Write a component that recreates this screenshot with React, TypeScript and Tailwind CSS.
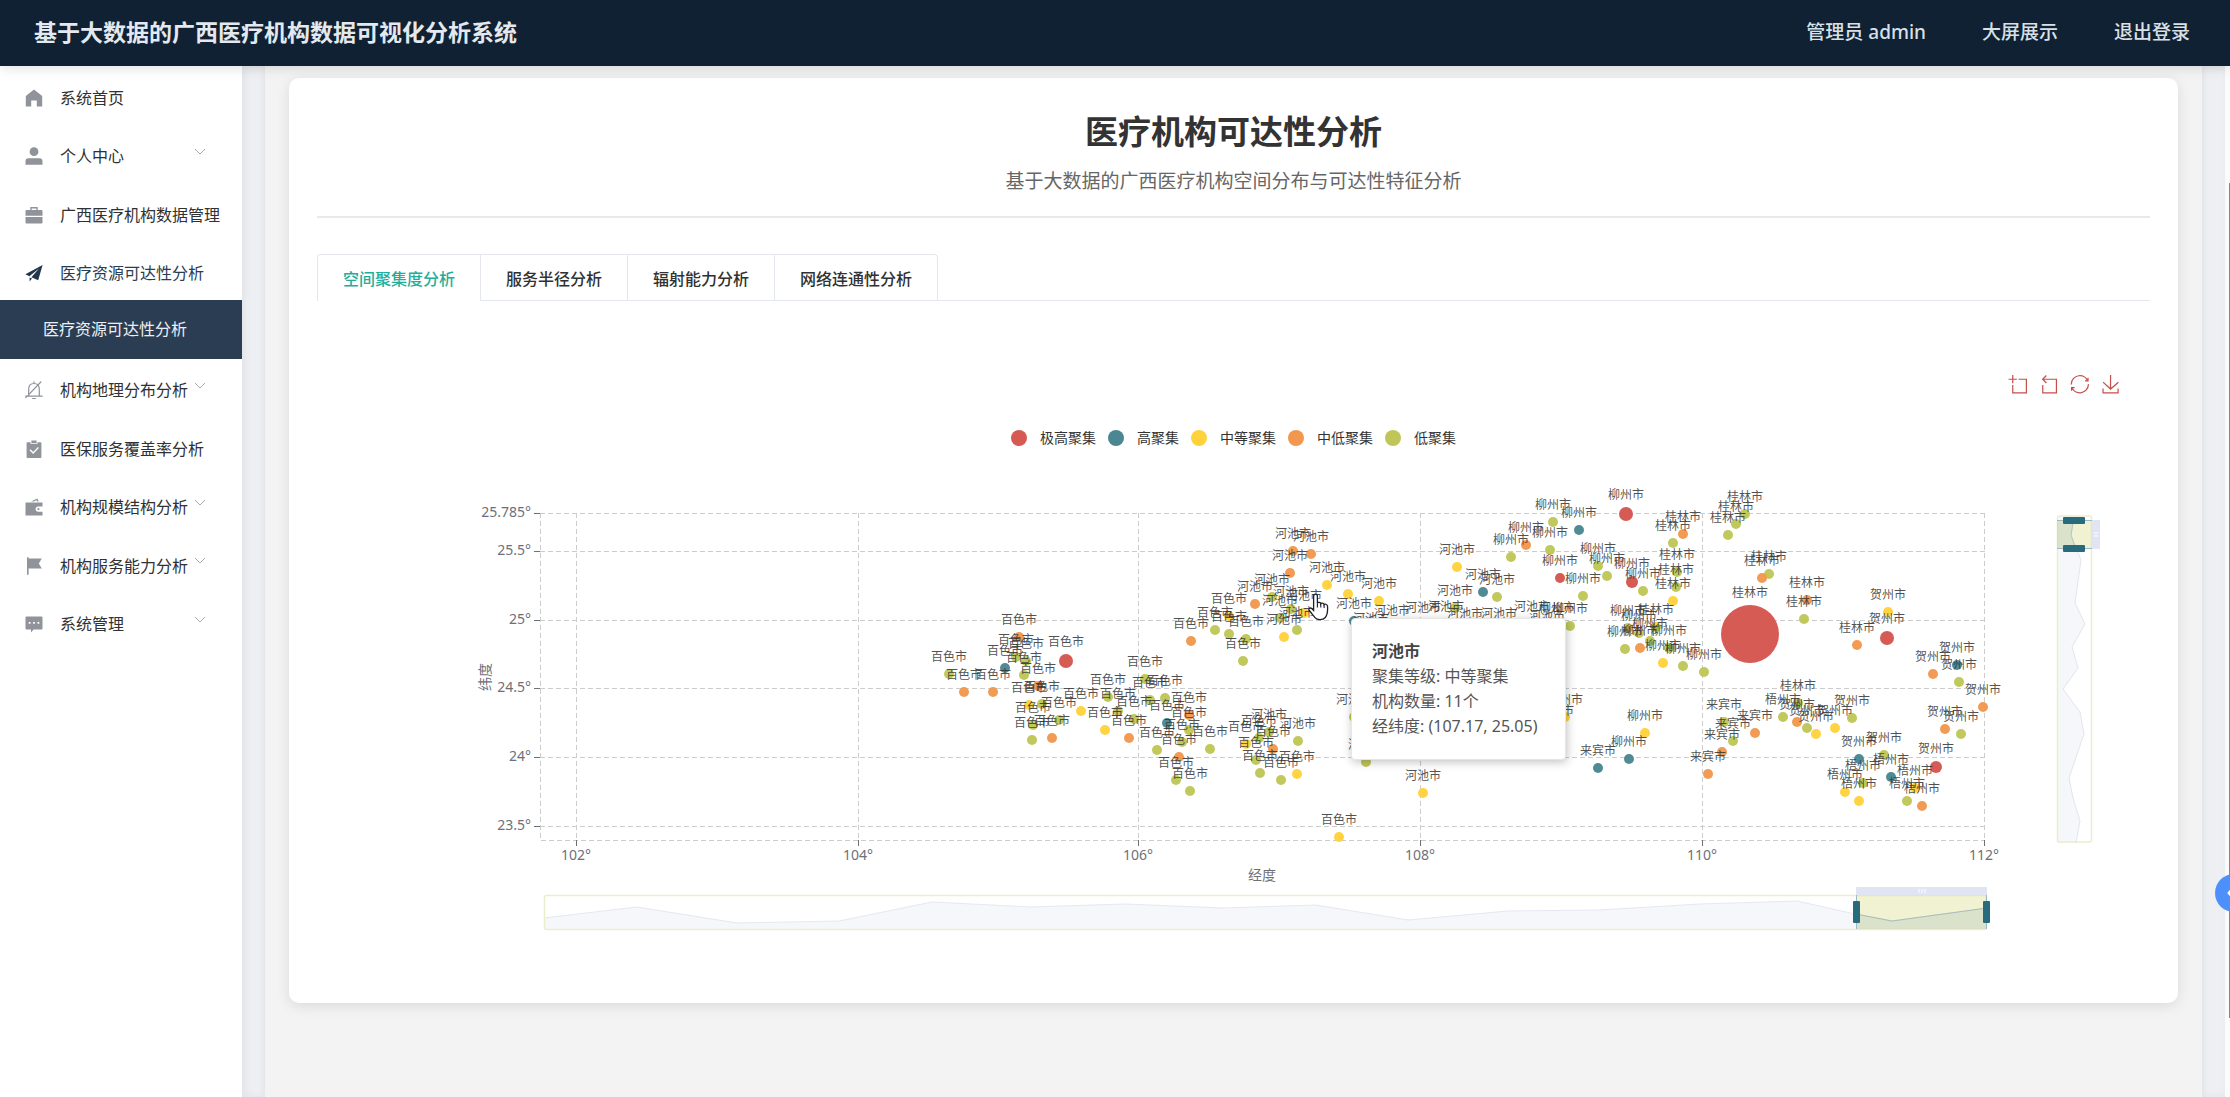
import { useState } from 'react'
import type { ReactNode } from 'react'

type Level = 'r' | 't' | 'y' | 'o' | 'g'

const levels: { key: Level; name: string; color: string; dot: string }[] = [
  { key: 'r', name: '极高聚集', color: '#d5564f', dot: 'bg-[#d65a54]' },
  { key: 't', name: '高聚集', color: '#4a8792', dot: 'bg-[#4a8792]' },
  { key: 'y', name: '中等聚集', color: '#ffd23c', dot: 'bg-[#ffd23c]' },
  { key: 'o', name: '中低聚集', color: '#f2984e', dot: 'bg-[#f2984e]' },
  { key: 'g', name: '低聚集', color: '#bfc657', dot: 'bg-[#bfc657]' },
]

const colorOf = (key: Level) => levels.find((l) => l.key === key)!.color

type Point = [number, number, Level, number?]

// [x, y, level, radius], grouped by city
const cities: { name: string; points: Point[] }[] = [
  {
    name: '百色市',
    points: [
      [949, 674, 'g'], [964, 692, 'o'], [993, 692, 'o'], [1005, 668, 't'], [1019, 637, 'o'],
      [1016, 657, 'g'], [1026, 661, 'g'], [1024, 675, 'g'], [1038, 686, 'o'], [1066, 661, 'r', 7],
      [1029, 705, 'y'], [1042, 704, 'g'], [1059, 720, 'g'], [1033, 725, 'g'], [1032, 740, 'g'],
      [1052, 738, 'o'], [1081, 711, 'y'], [1108, 697, 'g'], [1118, 711, 'g'], [1134, 719, 'g'],
      [1105, 730, 'y'], [1129, 738, 'o'], [1145, 679, 'g'], [1150, 700, 'g'], [1165, 698, 'g'],
      [1167, 723, 't'], [1189, 715, 'o'], [1189, 730, 'g'], [1182, 742, 'g'], [1157, 750, 'g'],
      [1179, 757, 'o'], [1210, 749, 'g'], [1176, 780, 'g'], [1190, 791, 'g'], [1191, 641, 'o'],
      [1215, 630, 'g'], [1229, 616, 'y'], [1229, 634, 'g'], [1246, 639, 'g'], [1243, 661, 'g'],
      [1259, 738, 'g'], [1246, 744, 'y'], [1273, 749, 'o'], [1256, 760, 'g'], [1260, 773, 'g'],
      [1297, 774, 'y'], [1281, 780, 'g'], [1339, 837, 'y'],
    ],
  },
  {
    name: '河池市',
    points: [
      [1255, 604, 'o'], [1272, 597, 'g'], [1290, 573, 'o'], [1293, 551, 'o'], [1311, 554, 'o'],
      [1327, 585, 'y'], [1348, 594, 'y'], [1291, 609, 'g'], [1304, 613, 'y'], [1280, 618, 'g'],
      [1297, 630, 'g'], [1284, 637, 'y'], [1269, 732, 'g'], [1298, 741, 'g'], [1457, 567, 'y'],
      [1379, 601, 'y'], [1483, 592, 't'], [1497, 597, 'g'], [1455, 608, 'g'], [1354, 621, 't'],
      [1392, 628, 'g'], [1423, 625, 'g'], [1446, 624, 'g'], [1465, 631, 'g'], [1499, 631, 'y'],
      [1371, 636, 'g'], [1532, 624, 'g'], [1547, 633, 'g'], [1423, 793, 'y'], [1366, 762, 'g'],
      [1354, 717, 'g'],
    ],
  },
  {
    name: '柳州市',
    points: [
      [1557, 625, 'g'], [1570, 626, 'g'], [1553, 522, 'g'], [1579, 530, 't'], [1626, 514, 'r', 7],
      [1526, 545, 'o'], [1550, 550, 'g'], [1511, 557, 'g'], [1598, 566, 'g'], [1560, 578, 'r', 5],
      [1607, 576, 'g'], [1632, 582, 'r', 6], [1583, 596, 'g'], [1643, 591, 'g'], [1628, 628, 'g'],
      [1639, 633, 'g'], [1650, 641, 'g'], [1625, 649, 'g'], [1640, 648, 'o'], [1669, 648, 'g'],
      [1663, 663, 'y'], [1683, 666, 'g'], [1704, 672, 'g'], [1645, 733, 'y'], [1629, 759, 't'],
      [1565, 717, 'y'], [1556, 728, 'g'],
    ],
  },
  {
    name: '桂林市',
    points: [
      [1683, 534, 'o'], [1673, 543, 'g'], [1677, 572, 'g'], [1676, 587, 'g'], [1673, 601, 'y'],
      [1656, 627, 'y'], [1745, 514, 'g'], [1736, 524, 'g'], [1728, 535, 'g'], [1769, 574, 'g'],
      [1762, 578, 'o'], [1750, 634, 'r', 29], [1807, 600, 'o'], [1804, 619, 'g'], [1857, 645, 'o'],
      [1798, 703, 'g'],
    ],
  },
  {
    name: '贺州市',
    points: [
      [1888, 612, 'y'], [1887, 638, 'r', 7], [1957, 665, 't'], [1933, 674, 'o'], [1959, 682, 'g'],
      [1983, 707, 'o'], [1945, 729, 'o'], [1961, 734, 'g'], [1936, 767, 'r', 6], [1797, 722, 'o'],
      [1807, 728, 'g'], [1852, 718, 'g'], [1835, 728, 'y'], [1816, 734, 'y'], [1859, 759, 't'],
      [1884, 755, 'g'],
    ],
  },
  {
    name: '梧州市',
    points: [
      [1783, 717, 'g'], [1891, 777, 't'], [1863, 783, 'g'], [1845, 792, 'y'], [1859, 801, 'y'],
      [1915, 788, 'y'], [1907, 801, 'g'], [1922, 806, 'o'],
    ],
  },
  {
    name: '来宾市',
    points: [
      [1598, 768, 't'], [1724, 722, 'g'], [1755, 733, 'o'], [1733, 741, 'g'], [1722, 752, 'o'],
      [1708, 774, 'o'],
    ],
  },
]

const xTicks = [
  { at: 576, text: '102°' },
  { at: 858, text: '104°' },
  { at: 1138, text: '106°' },
  { at: 1420, text: '108°' },
  { at: 1702, text: '110°' },
  { at: 1984, text: '112°' },
]

const yTicks = [
  { at: 513, text: '25.785°' },
  { at: 551, text: '25.5°' },
  { at: 620, text: '25°' },
  { at: 688, text: '24.5°' },
  { at: 757, text: '24°' },
  { at: 826, text: '23.5°' },
]

// echarts toolbox glyphs, drawn on a 58 x 58 box
const tools = [
  { name: '区域缩放', d: 'M0,13.5h26.9 M13.5,26.9V0 M32.1,13.5H58V58H13.5 V32.1' },
  { name: '区域缩放还原', d: 'M22,1.4L9.9,13.5l12.3,12.3 M10.3,13.5H54.9v44.6 H10.3v-26' },
  {
    name: '还原',
    d: 'M47,18.9h9.8V8.7 M56.3,20.1 C52.1,9,40.5,0.6,26.8,2.1C12.6,3.7,1.6,16.2,2.1,30.6 M13,41.1H3.1v10.2 M3.7,39.9c4.2,11.1,15.8,19.5,29.5,18 c14.2-1.6,25.2-14.1,24.7-28.5',
  },
  { name: '保存为图片', d: 'M4.7,22.9L29.3,45.5L54.7,23.4M4.6,43.6L4.6,58L53.8,58L53.8,43.6M29.2,45.1L29.2,0' },
]

const icons: Record<string, ReactNode> = {
  home: <path fill="currentColor" d="M9 0.5 17.2 7v10.5h-5.4V11.6H6.2v5.9H.8V7z" />,
  user: (
    <>
      <circle cx="9" cy="4.7" r="4.4" fill="currentColor" />
      <path fill="currentColor" d="M3.5 11.2h11q3 0 3 3v3.5H.5v-3.5q0-3 3-3z" />
    </>
  ),
  case: (
    <>
      <path fill="none" stroke="currentColor" strokeWidth="1.4" d="M6 4.5V1.7h6v2.8" />
      <path fill="currentColor" d="M1.5 4h15q1 0 1 1v4.7H.5V5q0-1 1-1zM.5 11h17v5.5q0 1-1 1h-15q-1 0-1-1z" />
    </>
  ),
  send: <path fill="currentColor" d="M17.6 1 .4 10.2l4 2L14 4.5l-7.6 8.7 6.8 3zM4.6 13.5v4l2.4-2.9z" />,
  bell: (
    <path
      fill="none"
      stroke="currentColor"
      strokeWidth="1.2"
      strokeLinecap="round"
      d="M9 0.8v1.4M3.7 15V8Q3.7 2.5 9 2.5T14.3 8v7M.8 15.2h16.4M7.6 17.6h2.8M.8 16.6 15.8 1"
    />
  ),
  claim: (
    <>
      <path fill="currentColor" d="M2.5 2.2h3v1.6h7V2.2h3q.9 0 .9.9v14q0 .9-.9.9h-13q-.9 0-.9-.9v-14q0-.9.9-.9zM6.4.6h5.2v2.4H6.4z" />
      <path fill="none" stroke="#fff" strokeWidth="1.4" d="M5 9.8 8.2 13l5.2-5.4" />
    </>
  ),
  wallet: (
    <>
      <path fill="currentColor" d="M6 3.6 12.2.6l1.7 3h-1.6l-.8-1.3-2.7 1.3zM.5 4.5h17v4h-4.3a2.6 2.6 0 0 0 0 5.2h4.3V17.5H.5z" />
      <circle cx="13.4" cy="11.1" r="1.1" fill="currentColor" />
    </>
  ),
  flag: <path fill="currentColor" d="M2 .3h1.6v1.3h13.2l-3 5 3 5H3.6v6.2H2z" />,
  comment: (
    <>
      <path fill="currentColor" d="M1.5 1.5h15q1 0 1 1v11q0 1-1 1h-8L6 17.4v-2.9H1.5q-1 0-1-1v-11q0-1 1-1z" />
      <path fill="#fff" d="M3.7 7h1.8v1.8H3.7zM8.1 7h1.8v1.8H8.1zM12.5 7h1.8v1.8h-1.8z" />
    </>
  ),
}

const menu = [
  { icon: 'home', text: '系统首页' },
  { icon: 'user', text: '个人中心', arrow: true },
  { icon: 'case', text: '广西医疗机构数据管理' },
  { icon: 'send', text: '医疗资源可达性分析', open: true },
  { text: '医疗资源可达性分析', sub: true },
  { icon: 'bell', text: '机构地理分布分析', arrow: true },
  { icon: 'claim', text: '医保服务覆盖率分析' },
  { icon: 'wallet', text: '机构规模结构分析', arrow: true },
  { icon: 'flag', text: '机构服务能力分析', arrow: true },
  { icon: 'comment', text: '系统管理', arrow: true },
]

const tabs = ['空间聚集度分析', '服务半径分析', '辐射能力分析', '网络连通性分析']

function Sidebar() {
  return (
    <aside className="w-[242px] shrink-0 bg-white">
      <nav className="grid h-[585px] auto-rows-fr">
        {menu.map((item, i) =>
          item.sub ? (
            <a key={i} href="#" className="flex items-center bg-[#2b3d52] pl-[43px] text-[16px] leading-6 text-[#eceff2]">
              {item.text}
            </a>
          ) : (
            <a
              key={i}
              href="#"
              className={`relative flex items-center pt-[5px] pl-[25px] text-[16px] leading-6 whitespace-nowrap ${
                item.open ? 'text-[#2b3d52]' : 'text-[#303133]'
              }`}
            >
              <svg
                viewBox="0 0 18 18"
                className={`h-[18px] w-[18px] shrink-0 ${item.open ? 'text-[#22364b]' : 'text-[#909399]'}`}
              >
                {icons[item.icon!]}
              </svg>
              <span className="ml-[17px]">{item.text}</span>
              {item.arrow && (
                <svg viewBox="0 0 12 8" className="absolute top-[23px] left-[194px] h-2 w-3">
                  <path d="M1 1l5 5 5-5" fill="none" stroke="#a9acb3" />
                </svg>
              )}
            </a>
          )
        )}
      </nav>
    </aside>
  )
}

function SliderX() {
  return (
    <g>
      <path
        d="M544 929V918L637 907 737 923 839 921 932 902 1031 907 1125 904 1223 908 1316 905 1408 920 1508 911 1600 910 1700 904 1797 901 1855 914 1892 921 1987 908V929z"
        fill="#f6f7fb"
      />
      <path
        d="M544 918L637 907 737 923 839 921 932 902 1031 907 1125 904 1223 908 1316 905 1408 920 1508 911 1600 910 1700 904 1797 901 1855 914 1892 921 1987 908"
        fill="none"
        stroke="#e6e8f1"
      />
      <rect x="544.5" y="895.5" width="1442" height="34" rx="2" fill="none" stroke="#ebedcb" strokeWidth="1.5" />
      <rect x="1856" y="895" width="131" height="34" fill="#dfe29c" fillOpacity="0.45" />
      <path d="M1856 914l36 7 95-13v21h-131z" fill="#7f9fb0" fillOpacity="0.15" />
      <path d="M1856 914l36 7 95-13" fill="none" stroke="#a9bdb9" />
      <rect x="1856" y="887" width="131" height="8" fill="#e1e4f3" />
      <path d="M1919 889v4M1922 889v4M1925 889v4" stroke="#fff" />
      <path d="M1856.5 895v34M1986.5 895v34" stroke="#9db9c4" />
      <rect x="1853" y="901" width="7" height="22" rx="1" fill="#276b7c" />
      <rect x="1983" y="901" width="7" height="22" rx="1" fill="#276b7c" />
    </g>
  )
}

function SliderY() {
  return (
    <g>
      <path
        d="M2057 516H2073V523L2071 535 2081 560 2075 603 2085 624 2072 647 2078 668 2063 689 2080 712 2084 734 2069 778 2073 798 2080 821 2076 843H2057z"
        fill="#f6f7fb"
      />
      <path
        d="M2073 516V523L2071 535 2081 560 2075 603 2085 624 2072 647 2078 668 2063 689 2080 712 2084 734 2069 778 2073 798 2080 821 2076 843"
        fill="none"
        stroke="#e3e5ef"
      />
      <rect x="2057.5" y="516" width="34" height="326" rx="2" fill="none" stroke="#ebedcb" strokeWidth="1.5" />
      <rect x="2057" y="521" width="35" height="28" fill="#dfe29c" fillOpacity="0.45" />
      <path d="M2057 521h16v2l-2 12 5 14h-19z" fill="#7f9fb0" fillOpacity="0.15" />
      <path d="M2073 521v2l-2 12 5 14" fill="none" stroke="#b7c6c3" />
      <rect x="2092" y="520" width="8" height="29" fill="#e1e4f3" />
      <path d="M2094 533h4M2094 536h4" stroke="#fff" />
      <path d="M2057 520.5h35M2057 548.5h35" stroke="#9db9c4" />
      <rect x="2063" y="517" width="22" height="7" rx="1" fill="#276b7c" />
      <rect x="2063" y="545" width="22" height="7" rx="1" fill="#276b7c" />
    </g>
  )
}

function Scatter() {
  return (
    <svg viewBox="317 480 1833 460" className="block w-full">
      <g stroke="#ccc" strokeDasharray="5 3" fill="none">
        {xTicks.map((t) => (
          <path key={t.text} d={`M${t.at + 0.5} 513V840`} />
        ))}
        {yTicks.map((t) => (
          <path key={t.text} d={`M540 ${t.at + 0.5}H1985`} />
        ))}
        <path d="M540.5 513V840.5H1985" />
      </g>
      <g stroke="#6e7079">
        {xTicks.map((t) => (
          <path key={t.text} d={`M${t.at + 0.5} 840v6`} />
        ))}
        {yTicks.map((t) => (
          <path key={t.text} d={`M534 ${t.at + 0.5}h6`} />
        ))}
      </g>
      <g fontSize="14" fill="#6e7079">
        {xTicks.map((t) => (
          <text key={t.text} x={t.at} y="860" textAnchor="middle">
            {t.text}
          </text>
        ))}
        {yTicks.map((t) => (
          <text key={t.text} x="531" y={t.at + 4} textAnchor="end">
            {t.text}
          </text>
        ))}
        <text x="1262" y="880" textAnchor="middle">
          经度
        </text>
        <text transform="translate(490 677) rotate(-90)" textAnchor="middle">
          纬度
        </text>
      </g>
      {cities.map((city) =>
        city.points.map(([x, y, level, r = 5], i) => (
          <circle key={city.name + i} cx={x} cy={y} r={r} fill={colorOf(level)} fillOpacity="0.97" />
        ))
      )}
      <g fontSize="12" fill="#333" fillOpacity="0.85" textAnchor="middle">
        {cities.map((city) =>
          city.points.map(([x, y, , r = 5], i) => (
            <text key={city.name + i} x={x} y={y - r - 8}>
              {city.name}
            </text>
          ))
        )}
      </g>
      <SliderX />
      <SliderY />
    </svg>
  )
}

function Tooltip() {
  return (
    <div className="absolute top-[138px] left-[1034px] min-w-[215px] rounded-sm border border-[#e6e6e6] bg-white p-5 text-[16px] leading-[25px] whitespace-nowrap text-[#555] shadow-[1px_2px_10px_rgba(0,0,0,0.25)]">
      <div className="font-bold text-[#444]">河池市</div>
      <div>聚集等级: 中等聚集</div>
      <div>机构数量: 11个</div>
      <div>经纬度: (107.17, 25.05)</div>
    </div>
  )
}

function Pointer() {
  return (
    <svg viewBox="0 0 22 28" className="absolute top-[113px] left-[991px] h-7 w-[22px]">
      <path
        d="M7.5 1.2c1.2 0 1.9.8 1.9 2V10c.3-1 3.3-1 3.4.6.5-.9 3.2-.7 3.3.9.6-.7 3.2-.5 3.4 1.6.4 5.4 0 8.8-2.2 11.4-2.3 2.7-8.1 3-10.3.2L1.3 17.5c-1-1.5.4-3.2 2.2-2.1l2.1 2V3.2c0-1.2.7-2 1.9-2z"
        fill="#fff"
        stroke="#1f1f2b"
        strokeWidth="1.3"
      />
      <path d="M9.4 10v4.5M12.8 10.6v4M16.1 11.5V15" stroke="#1f1f2b" strokeWidth="1.1" />
    </svg>
  )
}

export default function App() {
  const [tab, setTab] = useState(tabs[0])

  return (
    <div className="flex min-h-screen flex-col overflow-hidden bg-[#eeeff3] font-['Noto_Sans','Noto_Sans_CJK_SC',sans-serif]">
      {/* Header */}
      <header className="relative z-10 flex h-[66px] items-center justify-between bg-[#102133] pr-10 pb-0.5 pl-[34px] shadow-[0_2px_12px_rgba(0,0,0,0.12)]">
        <h1 className="text-[23px] leading-8 font-bold text-[#e3e9ee]">基于大数据的广西医疗机构数据可视化分析系统</h1>
        <div className="flex gap-14 text-[19px] leading-7 font-medium text-[#d9e0e6]">
          <span>管理员 admin</span>
          <a href="#">大屏展示</a>
          <a href="#">退出登录</a>
        </div>
      </header>

      <div className="flex flex-1">
        <Sidebar />

        <main className="flex min-w-0 flex-1 px-[23px] shadow-[inset_3px_0_8px_rgba(0,0,0,0.05)]">
          <div className="min-w-0 flex-1 bg-[#f3f3f3] px-6 pt-3 shadow-[0_0_8px_rgba(0,0,0,0.08)]">
            <section className="rounded-[10px] bg-white px-7 pt-[30px] pb-[63px] shadow-[0_3px_14px_rgba(0,0,0,0.1)]">
              <div className="border-b-2 border-[#e9e9e9] pb-[21px] text-center">
                <h2 className="text-[33px] leading-[48px] font-bold text-[#333]">医疗机构可达性分析</h2>
                <p className="mt-[11px] text-[19px] leading-7 text-[#666]">基于大数据的广西医疗机构空间分布与可达性特征分析</p>
              </div>

              {/* Tabs */}
              <div className="mt-9 flex border-b border-[#e4e7ed]">
                <div role="tablist" className="-mb-px flex rounded-t border border-b-0 border-[#e4e7ed]">
                  {tabs.map((name) => (
                    <button
                      key={name}
                      role="tab"
                      aria-selected={tab === name}
                      onClick={() => setTab(name)}
                      className={`h-[46px] border-b border-l px-[25px] pt-0.5 text-[16px] leading-6 font-medium first:border-l-0 ${
                        tab === name
                          ? 'border-b-white border-l-[#e4e7ed] text-[#1fae9b]'
                          : 'border-[#e4e7ed] text-[#303133]'
                      }`}
                    >
                      {name}
                    </button>
                  ))}
                </div>
              </div>

              {/* Chart toolbox */}
              <div className="flex justify-end gap-3 pt-[73px] pr-[30px]">
                {tools.map((tool) => (
                  <button key={tool.name} aria-label={tool.name} className="h-5 w-[19px]">
                    <svg viewBox="-2 -2 62 62" className="h-5 w-[19px]">
                      <path d={tool.d} fill="none" stroke="#c4504a" strokeWidth="4" />
                    </svg>
                  </button>
                ))}
              </div>

              {/* Legend */}
              <div className="mt-[34px] mb-8 flex justify-center gap-3">
                {levels.map((level) => (
                  <button key={level.key} className="flex items-center gap-[13px] text-[14px] leading-5 text-[#333]">
                    <span className={`h-4 w-4 rounded-full ${level.dot}`} />
                    {level.name}
                  </button>
                ))}
              </div>

              <div className="relative">
                <Scatter />
                <Pointer />
                <Tooltip />
              </div>
            </section>
          </div>
        </main>

        {/* Scroll track */}
        <div className="flex w-[5px] shrink-0 justify-end bg-[#fbfbfc]">
          <div className="mt-[117px] h-[835px] w-px bg-[#858585]" />
        </div>
      </div>

      {/* Drawer handle */}
      <button
        aria-label="展开"
        className="fixed top-[874px] -right-[23px] z-20 flex h-[38px] w-[38px] items-center rounded-full bg-[#4d90fb] pl-3"
      >
        <svg viewBox="0 0 8 12" className="h-3 w-2">
          <path d="M6 1L1.5 6 6 11" fill="none" stroke="#fff" strokeWidth="2" />
        </svg>
      </button>
    </div>
  )
}
